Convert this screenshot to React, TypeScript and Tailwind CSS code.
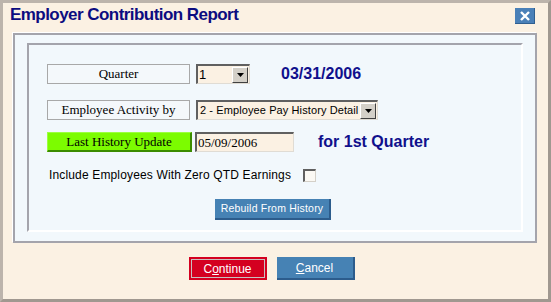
import React from 'react';

const Arrow = () => (
  <div className="shrink-0 w-[16px] h-[16px] bg-[#d4d0c8] border border-t-white border-l-white border-b-[#404040] border-r-[#404040] flex items-center justify-center">
    <svg width="7" height="4" viewBox="0 0 7 4"><path d="M0 0h7L3.5 4z" fill="#000" /></svg>
  </div>
);

const Label = ({ text, green }: { text: string; green?: boolean }) => (
  <div
    className={
      green
        ? 'w-[145px] h-[20px] bg-[#7cfc00] border border-t-[#9cff40] border-l-[#9cff40] border-b-[#3c8c00] border-r-[#3c8c00] border-b-2 border-r-2 flex items-center justify-center text-[13px] text-black whitespace-nowrap'
        : 'w-[143px] h-[20px] bg-[#f4f8fb] border border-[#a8a8a8] flex items-center justify-center text-[13px] text-black whitespace-nowrap'
    }
    style={{ fontFamily: '"Liberation Serif", serif' }}
  >
    {text}
  </div>
);

export default function App() {
  return (
    <div className="w-[551px] h-[302px] bg-[#fbf1e3] border-[3px] border-t-[#bcb4ac] border-l-[#bcb4ac] border-r-[#a09890] border-b-[#a09890] flex flex-col" style={{ fontFamily: '"Liberation Sans", Arial, sans-serif' }}>
      <div className="h-[30px] flex items-start justify-between pl-[7px] pr-[13px] pt-[1px]">
        <h1 className="text-[17px] font-bold text-[#0c0c80] leading-[22px] tracking-[-0.55px] whitespace-nowrap">Employer Contribution Report</h1>
        <button className="mt-[4px] w-[20px] h-[16px] bg-[#4a80b8] border-b border-r border-[#2f5f90] flex items-center justify-center">
          <svg width="10" height="10" viewBox="0 0 10 10"><path d="M1 1l8 8M9 1l-8 8" stroke="#fff" strokeWidth="2.4" /></svg>
        </button>
      </div>

      <div className="ml-[10px] mr-[11px] h-[210px] bg-[#f2f8fc] border-2 border-[#a4a4ac] shadow-[-1px_-1px_0_#ffffff] pl-[12px] pr-[12px] pt-[8px] pb-[9px]">
        <div className="h-[189px] border-2 border-t-[#a4a4ac] border-l-[#a4a4ac] border-b-white border-r-white pl-[18px] pt-[19px] flex flex-col">
          <div className="flex items-center h-[20px]">
            <Label text="Quarter" />
            <div className="ml-[6px] w-[54px] h-[20px] bg-[#fbf1e3] border-2 border-t-[#606060] border-l-[#606060] border-b-[#e0dcd4] border-r-[#e0dcd4] border-b border-r flex items-center justify-between pl-[1px] pr-[1px]">
              <span className="text-[13px] text-black">1</span>
              <Arrow />
            </div>
            <span className="ml-[31px] text-[16px] font-bold text-[#10108c]">03/31/2006</span>
          </div>

          <div className="flex items-center h-[20px] mt-[16px]">
            <Label text="Employee Activity by" />
            <div className="ml-[6px] w-[182px] h-[20px] bg-[#fbf1e3] border-2 border-t-[#606060] border-l-[#606060] border-b-[#e0dcd4] border-r-[#e0dcd4] border-b border-r flex items-center justify-between pl-[2px] pr-[1px]">
              <span className="text-[11px] tracking-[0.1px] text-black whitespace-nowrap">2 - Employee Pay History Detail</span>
              <Arrow />
            </div>
          </div>

          <div className="flex items-center h-[20px] mt-[12px]">
            <Label text="Last History Update" green />
            <div className="ml-[3px] w-[99px] h-[20px] bg-[#fbf1e3] border-2 border-t-[#606060] border-l-[#606060] border-b-[#e0dcd4] border-r-[#e0dcd4] border-b border-r flex items-center pl-[1px] text-[13px] text-black" style={{ fontFamily: '"Liberation Serif", serif' }}>
              05/09/2006
            </div>
            <span className="ml-[24px] text-[16px] font-bold text-[#10108c]">for 1st Quarter</span>
          </div>

          <div className="flex items-center h-[16px] mt-[15px] pl-[2px]">
            <span className="text-[12px] tracking-[0.15px] text-black whitespace-nowrap">Include Employees With Zero QTD Earnings</span>
            <div className="ml-[12px] w-[13px] h-[13px] bg-[#fbf9f4] border-2 border-t-[#606060] border-l-[#606060] border-b-[#d4d0c8] border-r-[#d4d0c8] border-b border-r" />
          </div>

          <div className="mt-[16px] pl-[168px]">
            <button className="w-[116px] h-[21px] bg-[#4682b4] border-b-2 border-r-2 border-[#2c5c8c] text-white text-[10.5px] tracking-[0.2px] flex items-center justify-center whitespace-nowrap">
              Rebuild From History
            </button>
          </div>
        </div>
      </div>

      <div className="flex justify-center gap-[10px] pr-[8px] mt-[14px]">
        <button className="w-[78px] h-[23px] bg-[#d40020] flex items-center justify-center p-[2px]">
          <span className="w-full h-full border border-[#c8c0c0] flex items-center justify-center text-white text-[12px]">
            C<u>o</u>ntinue
          </span>
        </button>
        <button className="w-[78px] h-[23px] bg-[#4682b4] border-b-2 border-r-2 border-[#2c5c8c] text-white text-[12px] flex items-center justify-center">
          <u>C</u>ancel
        </button>
      </div>
    </div>
  );
}
